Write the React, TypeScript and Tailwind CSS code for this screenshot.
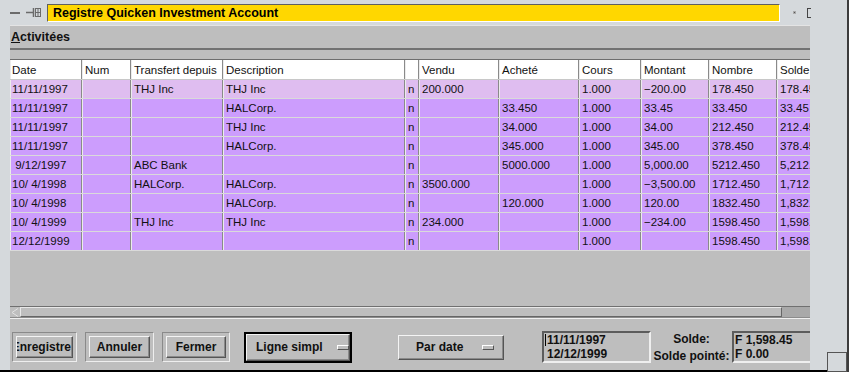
const rows = [
  ["11/11/1997", "", "THJ Inc", "THJ Inc", "n", "200.000", "", "1.000", "−200.00", "178.450", "178.45"],
  ["11/11/1997", "", "", "HALCorp.", "n", "", "33.450", "1.000", "33.45", "33.450", "33.45"],
  ["11/11/1997", "", "", "THJ Inc", "n", "", "34.000", "1.000", "34.00", "212.450", "212.45"],
  ["11/11/1997", "", "", "HALCorp.", "n", "", "345.000", "1.000", "345.00", "378.450", "378.45"],
  [" 9/12/1997", "", "ABC Bank", "", "n", "", "5000.000", "1.000", "5,000.00", "5212.450", "5,212.45"],
  ["10/ 4/1998", "", "HALCorp.", "HALCorp.", "n", "3500.000", "", "1.000", "−3,500.00", "1712.450", "1,712.45"],
  ["10/ 4/1998", "", "", "HALCorp.", "n", "", "120.000", "1.000", "120.00", "1832.450", "1,832.45"],
  ["10/ 4/1999", "", "THJ Inc", "THJ Inc", "n", "234.000", "", "1.000", "−234.00", "1598.450", "1,598.45"],
  ["12/12/1999", "", "", "", "n", "", "", "1.000", "", "1598.450", "1,598.45"],
];

const headers = ["Date", "Num", "Transfert depuis", "Description", "", "Vendu", "Acheté", "Cours", "Montant", "Nombre", "Solde"];

const gridCols =
  "grid grid-cols-[72px_49px_92px_182px_14px_80px_80px_62px_68px_68px_80px] w-[847px]";

function Cell({ text, first }: { text: string; first: boolean }) {
  return (
    <div
      className={`h-full overflow-hidden whitespace-pre border-r border-[#8a8a8a] shadow-[inset_1px_0_0_#ececec] ${first ? "pl-[2px]" : "pl-[3px]"}`}
    >
      {text}
    </div>
  );
}

function Bevel({ children, className }: { children: React.ReactNode; className: string }) {
  return (
    <div
      className={`flex items-center whitespace-nowrap border border-t-[#f4f4f4] border-l-[#f4f4f4] border-b-[#555] border-r-[#555] shadow-[inset_-1px_-1px_0_#8a8a8a] ${className}`}
    >
      {children}
    </div>
  );
}

function PushButton({ label, w, align }: { label: string; w: string; align: string }) {
  return (
    <div className={`h-[30px] border border-t-[#8a8a8a] border-l-[#8a8a8a] border-b-[#eeeeee] border-r-[#eeeeee] p-[3px] ${w}`}>
      <Bevel className={`h-full w-full overflow-hidden ${align}`}>
        <span>{label}</span>
      </Bevel>
    </div>
  );
}

export default function App() {
  return (
    <div
      className="relative w-[849px] h-[372px] bg-[#d5d9dc] border-r-2 border-[#3c3c3c] flex flex-col overflow-hidden text-[#111]"
      style={{ fontFamily: '"Liberation Sans", Arial, sans-serif' }}
    >
      {/* Title bar */}
      <div className="h-[25px] flex items-center shrink-0">
        <div className="ml-[10px] w-[10px] h-[2px] bg-[#6b6b6b]" />
        <svg className="ml-[6px]" width="15" height="11" viewBox="0 0 15 11">
          <line x1="0" y1="5.5" x2="7" y2="5.5" stroke="#6b6b6b" strokeWidth="1.5" />
          <line x1="7.5" y1="1" x2="7.5" y2="10" stroke="#6b6b6b" strokeWidth="1.5" />
          <rect x="9.5" y="1.5" width="5" height="8" fill="none" stroke="#6b6b6b" strokeWidth="1" />
          <line x1="9.5" y1="5.5" x2="14.5" y2="5.5" stroke="#6b6b6b" strokeWidth="1" />
          <line x1="12" y1="1.5" x2="12" y2="9.5" stroke="#6b6b6b" strokeWidth="1" />
        </svg>
        <div className="ml-[6px] w-[733px] h-[18px] bg-[#ffd700] border border-t-[#5f5f5f] border-l-[#5f5f5f] border-b-white border-r-white pl-[5px] text-[12.5px] font-bold leading-[16px] text-black">
          Registre Quicken Investment Account
        </div>
        <div className="ml-[13px] w-[3px] h-[3px] bg-[#555] border border-[#aaa]" />
        <div className="ml-[11px] w-[4px] h-[10px] border-l border-t border-b border-[#444]" />
      </div>

      {/* Body */}
      <div className="flex h-[345px] shrink-0">
        <div className="w-[10px] shrink-0" />
        <div className="w-[800px] shrink-0 bg-[#bebebe] flex flex-col border-t border-[#e4e4e4]">
          <div className="h-[22px] flex items-center pl-[1px] text-[12.5px] font-bold">
            <span>
              <span className="underline">A</span>ctivitées
            </span>
          </div>
          <div className="h-[2px] bg-[#727272]" />
          <div className="h-[9px]" />

          {/* Table */}
          <div className="h-[192px] overflow-hidden border-t border-[#6e6e6e] text-[11.5px]">
            <div className={`${gridCols} h-[20px] leading-[21px] bg-white border-b border-[#c8c8c8]`}>
              {headers.map((h, i) => (
                <Cell key={i} text={h} first={i === 0} />
              ))}
            </div>
            {rows.map((r, i) => (
              <div
                key={i}
                className={`${gridCols} h-[19px] leading-[19px] border-b border-[#dadada] ${i === 0 ? "bg-[#dfbdf0]" : "bg-[#cc9dfd]"}`}
              >
                {r.map((c, j) => (
                  <Cell key={j} text={c} first={j === 0} />
                ))}
              </div>
            ))}
          </div>

          <div className="h-[55px]" />

          {/* Horizontal scrollbar */}
          <div className="h-[12px] flex border-t border-[#707070] border-b border-b-[#8c8c8c]">
            <div className="w-[10px] flex items-center justify-center">
              <svg width="8" height="9" viewBox="0 0 8 9">
                <path d="M7 0.5 L1 4.5 L7 8.5" fill="none" stroke="#e2e2e2" strokeWidth="1" />
              </svg>
            </div>
            <div className="w-[762px] border border-t-[#e8e8e8] border-l-[#e8e8e8] border-b-[#666] border-r-[#666] bg-[#bebebe]" />
            <div className="flex-1 bg-[#a9a9a9]" />
          </div>
          <div className="h-[1px] bg-[#efefef]" />

          {/* Button bar */}
          <div className="h-[50px] flex items-center pt-[6px] text-[12px] font-bold">
            <PushButton label="Enregistre" w="ml-[2px] w-[65px]" align="justify-end pr-[1px]" />
            <PushButton label="Annuler" w="ml-[8px] w-[69px]" align="justify-center" />
            <PushButton label="Fermer" w="ml-[8px] w-[68px]" align="justify-center" />

            <div className="ml-[14px] h-[31px] w-[108px] border-2 border-black">
              <Bevel className="h-full w-full pl-[9px]">
                <span>Ligne simpl</span>
                <div className="ml-[14px] w-[12px] h-[5px] border border-t-white border-l-white border-b-[#555] border-r-[#555]" />
              </Bevel>
            </div>

            <Bevel className="ml-[46px] h-[25px] w-[106px] pl-[17px]">
              <span>Par date</span>
              <div className="ml-[19px] w-[12px] h-[5px] border border-t-white border-l-white border-b-[#555] border-r-[#555]" />
            </Bevel>

            <div className="ml-[38px] h-[32px] w-[109px] border-2 border-t-[#5c5c5c] border-l-[#5c5c5c] border-b-[#efefef] border-r-[#efefef] pl-[1px] flex flex-col justify-center leading-[14px]">
              <div className="flex items-center">
                <span className="w-[1px] h-[12px] bg-black mr-[1px]" />
                <span>11/11/1997</span>
              </div>
              <div className="pl-[2px]">12/12/1999</div>
            </div>

            <div className="w-[81px] flex flex-col items-center leading-[17px] pt-[1px]">
              <span>Solde:</span>
              <span>Solde pointé:</span>
            </div>

            <div className="h-[32px] flex-1 border-2 border-t-[#5c5c5c] border-l-[#5c5c5c] border-b-[#efefef] border-r-0 pl-[1px] flex flex-col justify-center leading-[14px]">
              <span>F 1,598.45</span>
              <span>F 0.00</span>
            </div>
          </div>
        </div>
        <div className="flex-1" />
      </div>

      <div className="h-[2px] bg-black shrink-0" />

      {/* Resize grip */}
      <div className="absolute right-0 bottom-0 w-[20px] h-[20px] bg-[#d5d9dc] border border-[#555]" />
    </div>
  );
}
